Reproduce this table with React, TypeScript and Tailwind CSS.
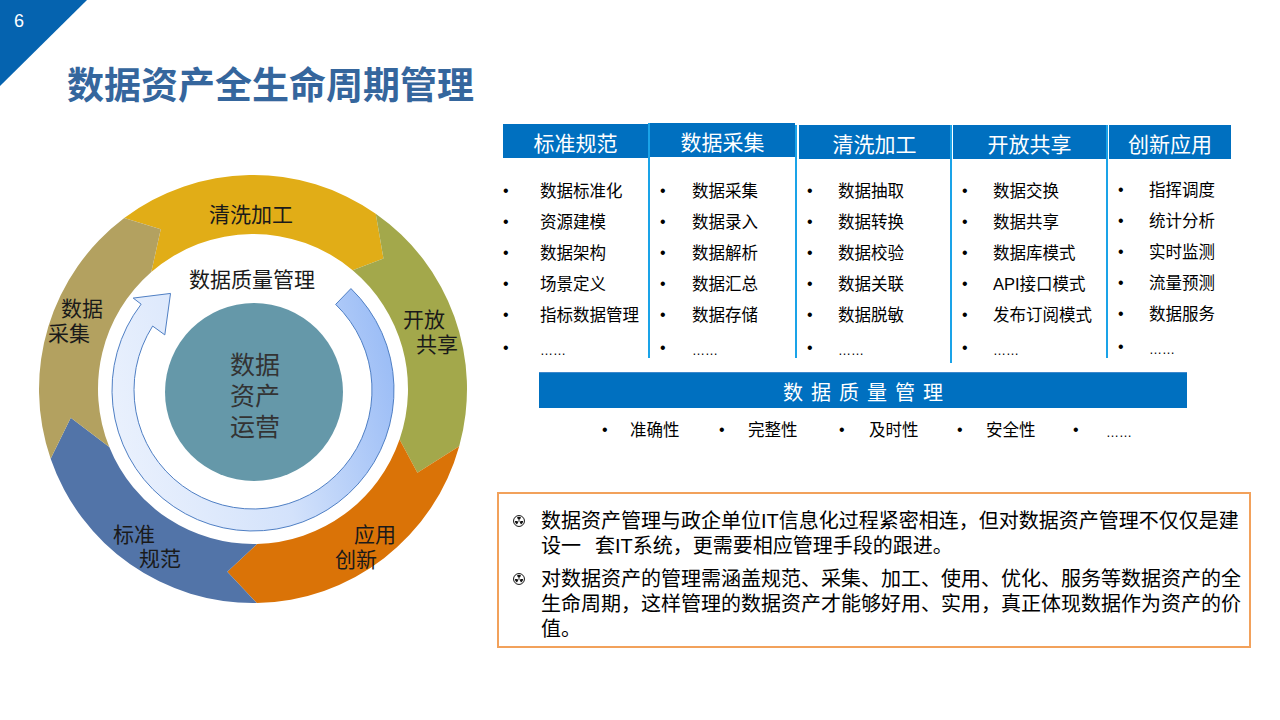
import React from "react";

type Seg = { color: string; tailO: number; tailI: number; notch: number; shO: number; shI: number; tip: number };

const RO = 214;
const RI = 155;
const RM = (RO + RI) / 2;

const pt = (cx: number, cy: number, r: number, deg: number) => {
  const a = (deg * Math.PI) / 180;
  return `${(cx + r * Math.sin(a)).toFixed(2)} ${(cy - r * Math.cos(a)).toFixed(2)}`;
};
const p = (r: number, d: number) => pt(253, 389, r, d);
const q = (r: number, d: number) => pt(253, 390, r, d);

const segs: Seg[] = [
  { color: "#E1AD17", tailO: -37, tailI: -41, notch: -30, shO: 35, shI: 40, tip: 45 },
  { color: "#A3A84B", tailO: 35, tailI: 40, notch: 45, shO: 105.5, shI: 109, tip: 117 },
  { color: "#DA7307", tailO: 105.5, tailI: 109, notch: 117, shO: 179, shI: 178.5, tip: 188 },
  { color: "#5274A8", tailO: 179, tailI: 178.5, notch: 188, shO: 251, shI: 248, tip: 261 },
  { color: "#B3A160", tailO: 251, tailI: 248, notch: 261, shO: 323, shI: 319, tip: 330 },
];

const segPath = (s: Seg) =>
  `M ${p(RO, s.tailO)} A ${RO} ${RO} 0 0 1 ${p(RO, s.shO)} L ${p(RM, s.tip)} L ${p(RI, s.shI)} A ${RI} ${RI} 0 0 0 ${p(RI, s.tailI)} L ${p(RM, s.notch)} Z`;

function Diagram() {
  const inner = `M ${q(141, 44)} A 141 141 0 1 1 ${q(141, 307.5)} L ${q(151, 307.5)} L ${q(127, 319.5)} L ${q(104, 302)} L ${q(119, 302.5)} A 119 119 0 1 0 ${q(119, 44)} Z`;
  const labels: [string, number, number][] = [
    ["清洗加工", 251, 213],
    ["开放", 424, 318],
    ["共享", 437, 343],
    ["应用", 375, 533],
    ["创新", 356, 558],
    ["标准", 134, 533],
    ["规范", 160, 557],
    ["数据", 82, 307],
    ["采集", 69, 332],
    ["数据质量管理", 252, 278],
  ];
  return (
    <svg width="445" height="440" viewBox="30 170 445 440" className="block">
      <defs>
        <linearGradient id="ig" x1="0" y1="0.6" x2="1" y2="0.4">
          <stop offset="0" stopColor="#EAF1FD" />
          <stop offset="0.55" stopColor="#D3E2FB" />
          <stop offset="1" stopColor="#9DBEF6" />
        </linearGradient>
      </defs>
      {segs.map((s, i) => (
        <path key={i} d={segPath(s)} fill={s.color} />
      ))}
      <path d={inner} fill="url(#ig)" stroke="#4F7FC4" strokeWidth="1" />
      <circle cx="254" cy="392" r="89" fill="#6598A9" />
      <g fontFamily="'Noto Sans CJK SC', sans-serif" textAnchor="middle" dominantBaseline="central">
        {labels.map(([t, x, y]) => (
          <text key={t + x} x={x} y={y} fontSize="21" fill="#1a1a1a">
            {t}
          </text>
        ))}
        <text x="255" y="363" fontSize="25" fill="#333">数据</text>
        <text x="255" y="394" fontSize="25" fill="#333">资产</text>
        <text x="255" y="425" fontSize="25" fill="#333">运营</text>
      </g>
    </svg>
  );
}

type Col = {
  title: string;
  items: string[];
  wrap: string;
  head: string;
  list: string;
  bml: string;
  bw: string;
};

const cols: Col[] = [
  {
    title: "标准规范",
    items: ["数据标准化", "资源建模", "数据架构", "场景定义", "指标数据管理"],
    wrap: "w-[145px] mt-[1px] h-[234px]",
    head: "w-[145px]",
    list: "pt-[17px]",
    bml: "ml-[0px]",
    bw: "w-[37px]",
  },
  {
    title: "数据采集",
    items: ["数据采集", "数据录入", "数据解析", "数据汇总", "数据存储"],
    wrap: "w-[147px] mt-[0px] h-[235px] border-l-2 border-[#1AA3E8]",
    head: "w-[145px]",
    list: "pt-[18px]",
    bml: "ml-[10px]",
    bw: "w-[32px]",
  },
  {
    title: "清洗加工",
    items: ["数据抽取", "数据转换", "数据校验", "数据关联", "数据脱敏"],
    wrap: "w-[155px] mt-[2px] h-[233px] border-l-2 border-[#1AA3E8] pl-[2px]",
    head: "w-[151px]",
    list: "pt-[16px]",
    bml: "ml-[8px]",
    bw: "w-[31px]",
  },
  {
    title: "开放共享",
    items: ["数据交换", "数据共享", "数据库模式", "API接口模式", "发布订阅模式"],
    wrap: "w-[156px] mt-[2px] h-[238px] border-l-2 border-[#1AA3E8] pl-[1px]",
    head: "w-[153px]",
    list: "pt-[16px]",
    bml: "ml-[9px]",
    bw: "w-[31px]",
  },
  {
    title: "创新应用",
    items: ["指挥调度", "统计分析", "实时监测", "流量预测", "数据服务"],
    wrap: "w-[125px] mt-[2px] h-[233px] border-l-2 border-[#1AA3E8] pl-[1px]",
    head: "w-[122px]",
    list: "pt-[15px]",
    bml: "ml-[9px]",
    bw: "w-[31px]",
  },
];

const quality: { t: string; w: string; bw: string }[] = [
  { t: "准确性", w: "w-[117px]", bw: "w-[28px]" },
  { t: "完整性", w: "w-[120px]", bw: "w-[29px]" },
  { t: "及时性", w: "w-[118px]", bw: "w-[30px]" },
  { t: "安全性", w: "w-[116px]", bw: "w-[29px]" },
  { t: "……", w: "w-[60px]", bw: "w-[33px]" },
];

function Trefoil() {
  const sector = (deg: number) => {
    const a1 = ((deg - 30) * Math.PI) / 180;
    const a2 = ((deg + 30) * Math.PI) / 180;
    const r1 = 1.3;
    const r2 = 3.8;
    const P = (r: number, a: number) => `${(5.5 + r * Math.sin(a)).toFixed(2)} ${(5.5 - r * Math.cos(a)).toFixed(2)}`;
    return `M ${P(r1, a1)} L ${P(r2, a1)} A ${r2} ${r2} 0 0 1 ${P(r2, a2)} L ${P(r1, a2)} A ${r1} ${r1} 0 0 0 ${P(r1, a1)} Z`;
  };
  return (
    <svg width="12" height="12" viewBox="0 0 11 11" className="block shrink-0">
      <circle cx="5.5" cy="5.5" r="5" fill="none" stroke="#111" strokeWidth="0.9" />
      <circle cx="5.5" cy="5.5" r="0.7" fill="#111" />
      <path d={sector(0)} fill="#111" />
      <path d={sector(120)} fill="#111" />
      <path d={sector(240)} fill="#111" />
    </svg>
  );
}

export default function App() {
  return (
    <div className="relative w-[1280px] h-[720px] overflow-hidden bg-white text-black font-['Liberation_Sans','Noto_Sans_CJK_SC',sans-serif]">
      <div className="absolute left-0 top-0 w-[87px] h-[86px]">
        <svg width="87" height="86" viewBox="0 0 87 86" className="block">
          <polygon points="0,0 87,0 0,86" fill="#0563AF" />
        </svg>
        <span className="absolute left-[14px] top-[10px] text-[18px] leading-[22px] text-white">6</span>
      </div>

      <div className="h-[103px] pt-[63px] pl-[67px] text-[37px] leading-[40px] font-bold text-[#35669D] font-['Noto_Sans_CJK_SC',sans-serif]">
        数据资产全生命周期管理
      </div>

      <div className="flex">
        <div className="w-[497px] shrink-0 pl-[30px] pt-[67px]">
          <Diagram />
        </div>

        <div className="flex flex-col pt-[20px]">
          <div className="flex h-[235px] ml-[6px] items-start">
            {cols.map((c) => (
              <div key={c.title} className={`flex flex-col shrink-0 ${c.wrap}`}>
                <div
                  className={`h-[34px] bg-[#0070C0] text-white text-[21px] leading-[29px] pt-[5px] text-center ${c.head}`}
                >
                  {c.title}
                </div>
                <div className={`flex flex-col ${c.list}`}>
                  {c.items.map((it) => (
                    <div key={it} className="flex items-center h-[31px] whitespace-nowrap">
                      <span className={`text-[16px] leading-[16px] shrink-0 ${c.bml} ${c.bw}`}>•</span>
                      <span className="text-[16.5px] leading-[20px]">{it}</span>
                    </div>
                  ))}
                  <div className="flex items-center h-[31px] mt-[2px] whitespace-nowrap">
                    <span className={`text-[16px] leading-[16px] shrink-0 ${c.bml} ${c.bw}`}>•</span>
                    <span className="text-[13px] leading-[20px] pt-[6px]">……</span>
                  </div>
                </div>
              </div>
            ))}
          </div>

          <div className="mt-[14px] ml-[42px] w-[648px] h-[36px] bg-[#0070C0] border-t border-[#3D88CC] text-white text-[20px] leading-[28px] pt-[6px] text-center tracking-[8px] pl-[8px]">
            数据质量管理
          </div>

          <div className="flex mt-[9px] h-[25px] pl-[105px] whitespace-nowrap">
            {quality.map((it) => (
              <div key={it.t} className={`flex items-center shrink-0 ${it.w}`}>
                <span className={`text-[16px] leading-[16px] shrink-0 ${it.bw}`}>•</span>
                {it.t === "……" ? (
                  <span className="text-[13px] leading-[20px] pt-[6px]">……</span>
                ) : (
                  <span className="text-[16.5px] leading-[20px]">{it.t}</span>
                )}
              </div>
            ))}
          </div>

          <div className="mt-[50px] w-[754px] h-[156px] border-2 border-[#F2A15B] pl-[14px] pt-[15px] flex flex-col gap-[8px] text-[20px] leading-[25px] text-black">
            <div className="flex items-start">
              <div className="mt-[6px]">
                <Trefoil />
              </div>
              <div className="ml-[16px] whitespace-nowrap">
                <div>数据资产管理与政企单位IT信息化过程紧密相连，但对数据资产管理不仅仅是建</div>
                <div>
                  设一<span className="inline-block w-[14px]"></span>套IT系统，更需要相应管理手段的跟进。
                </div>
              </div>
            </div>
            <div className="flex items-start">
              <div className="mt-[6px]">
                <Trefoil />
              </div>
              <div className="ml-[16px] whitespace-nowrap">
                <div>对数据资产的管理需涵盖规范、采集、加工、使用、优化、服务等数据资产的全</div>
                <div>生命周期，这样管理的数据资产才能够好用、实用，真正体现数据作为资产的价</div>
                <div>值。</div>
              </div>
            </div>
          </div>
        </div>
      </div>
    </div>
  );
}
